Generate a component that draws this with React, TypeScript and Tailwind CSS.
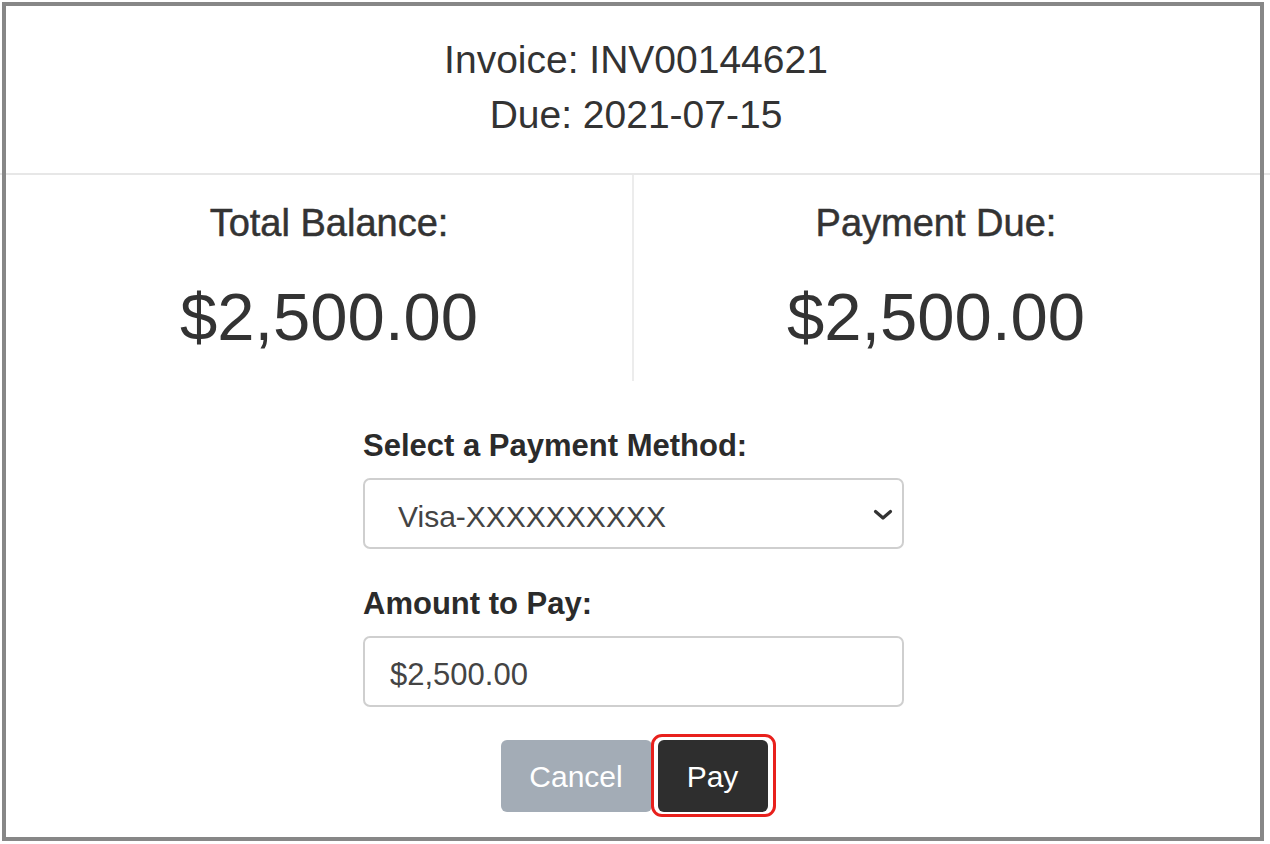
import React from "react";

export default function App() {
  return (
    <div
      className="relative w-[1270px] h-[844px] bg-white text-[#333333] overflow-hidden"
      style={{ fontFamily: '"Liberation Sans", Arial, sans-serif' }}
    >
      {/* Header */}
      <div className="pt-[32px] pb-[31px] text-center text-[39px] leading-[55px] pl-[2px]">
        <div>Invoice: INV00144621</div>
        <div>Due: 2021-07-15</div>
      </div>
      <div className="h-[2px] bg-[#e7e7e7]" />

      {/* Balances */}
      <div className="ml-[26px] mr-[32px] grid grid-cols-2">
        <div className="flex flex-col items-center pt-[20px] pb-[24px]">
          <div className="text-[38px] leading-[57px] [-webkit-text-stroke:0.5px_#333333]">Total Balance:</div>
          <div className="mt-[25px] text-[67px] leading-[80px]">$2,500.00</div>
        </div>
        <div className="flex flex-col items-center pt-[20px] pb-[24px] border-l-2 border-[#ececec]">
          <div className="text-[38px] leading-[57px] [-webkit-text-stroke:0.5px_#333333]">Payment Due:</div>
          <div className="mt-[25px] text-[67px] leading-[80px]">$2,500.00</div>
        </div>
      </div>

      {/* Form */}
      <div className="w-[541px] ml-[363px] mt-[42px]">
        <div className="text-[31px] leading-[45px] font-bold text-[#2b2b2b]">
          Select a Payment Method:
        </div>
        <div className="relative mt-[10px] h-[71px] rounded-[7px] border-2 border-[#cfcfcf] flex items-center pl-[33px] pt-[6px] text-[30px] text-[#444444]">
          Visa-XXXXXXXXXX
          <svg
            className="absolute right-[9px] top-[29px]"
            width="20"
            height="12"
            viewBox="0 0 20 12"
            fill="none"
          >
            <path d="M2.5 2.5 L10 9 L17.5 2.5" stroke="#333333" strokeWidth="3.2" strokeLinecap="round" strokeLinejoin="round" />
          </svg>
        </div>

        <div className="mt-[32px] text-[31px] leading-[45px] font-bold text-[#2b2b2b]">
          Amount to Pay:
        </div>
        <div className="mt-[10px] h-[71px] rounded-[7px] border-2 border-[#cfcfcf] flex items-center pl-[25px] pt-[8px] text-[31px] text-[#444444]">
          $2,500.00
        </div>

        <div className="mt-[33px] flex justify-center items-center gap-[6px] pl-[1px]">
          <button className="w-[151px] h-[72px] rounded-[6px] bg-[#a3acb6] text-white text-[30px]">
            Cancel
          </button>
          <div className="relative">
            <button className="w-[110px] h-[72px] rounded-[6px] bg-[#2e2e2e] text-white text-[30px]">
              Pay
            </button>
            <div className="pointer-events-none absolute -left-[7px] -top-[6px] -right-[8px] -bottom-[5px] rounded-[11px] border-[3px] border-[#e8201c]" />
          </div>
        </div>
      </div>

      {/* Outer frame */}
      <div className="pointer-events-none absolute left-[2px] top-[2px] w-[1262px] h-[839px] border-4 border-[#878787]" />
    </div>
  );
}
